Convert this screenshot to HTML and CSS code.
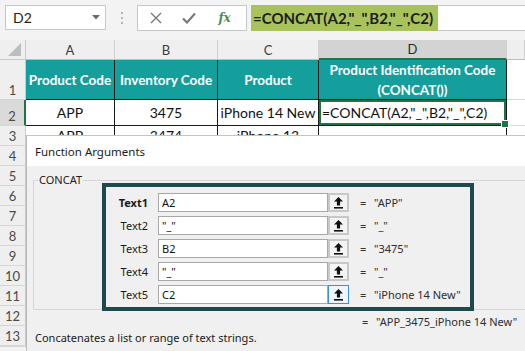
FILE: index.html
```html
<!DOCTYPE html>
<html>
<head>
<meta charset="utf-8">
<title>CONCAT</title>
<link rel="stylesheet" href="styles.css">
</head>
<body>
<div class="app">
  <div class="toolbar">
    <div class="namebox"><span>D2</span><svg class="dd" width="8" height="5" viewBox="0 0 8 5"><path d="M0 0H8L4 4.5Z" fill="#6b6b6b"/></svg></div>
    <div class="grip"><i></i><i></i><i></i></div>
    <div class="fbtns">
      <span class="ib ib1"><svg width="12" height="12" viewBox="0 0 12 12"><path d="M1 1L11 11M11 1L1 11" stroke="#7a7a7a" stroke-width="1.4" fill="none"/></svg></span>
      <span class="ib ib2"><svg width="14" height="12" viewBox="0 0 14 12"><path d="M1 6.5L5 10.5L13 1.5" stroke="#7a7a7a" stroke-width="2.2" fill="none"/></svg></span>
      <span class="ib ib3"><span class="fx">fx</span></span>
    </div>
    <div class="finput"><span class="formula">=CONCAT(A2,"_",B2,"_",C2)</span></div>
  </div>

  <div class="sheet">
    <div class="corner"><svg width="13" height="13" viewBox="0 0 13 13"><path d="M13 0V13H0Z" fill="#bdbdbd"/></svg></div>
    <div class="ch">A</div>
    <div class="ch">B</div>
    <div class="ch">C</div>
    <div class="ch ch-sel">D</div>
    <div class="ch"></div>

    <div class="rh rh-tall">1</div>
    <div class="c hd">Product Code</div>
    <div class="c hd">Inventory Code</div>
    <div class="c hd">Product</div>
    <div class="c hd">Product Identification Code<br>(CONCAT())</div>
    <div class="c e"></div>

    <div class="rh rh-sel">2</div>
    <div class="c d">APP</div>
    <div class="c d">3475</div>
    <div class="c d">iPhone 14 New</div>
    <div class="c d left sel">=CONCAT(A2,"_",B2,"_",C2)</div>
    <div class="c e"></div>

    <div class="rh">3</div>
    <div class="c d">APP</div>
    <div class="c d">3474</div>
    <div class="c d">iPhone 13</div>
    <div class="c d"></div>
    <div class="c e"></div>

    <div class="rh">4</div><div class="fill"></div>
    <div class="rh">5</div><div class="fill"></div>
    <div class="rh">6</div><div class="fill"></div>
    <div class="rh">7</div><div class="fill"></div>
    <div class="rh">8</div><div class="fill"></div>
    <div class="rh">9</div><div class="fill"></div>
    <div class="rh">10</div><div class="fill"></div>
    <div class="rh">11</div><div class="fill"></div>
    <div class="rh">12</div><div class="fill"></div>
    <div class="rh">13</div><div class="fill"></div>
    <div class="rh"></div><div class="fill"></div>
  </div>

  <div class="dialog">
    <div class="dtitle">Function Arguments</div>
    <div class="dbody">
      <div class="group">
        <span class="glabel">CONCAT</span>
        <div class="args">
          <div class="arg">
            <span class="alabel bold">Text1</span>
            <span class="ainput">A2</span>
            <span class="refbtn"><svg width="9" height="12" viewBox="0 0 9 12"><path d="M4.5 0L9 4.6H6.1V8.4H2.9V4.6H0Z" fill="#111"/><rect x="0" y="10" width="9" height="1.6" fill="#111"/></svg></span>
            <span class="eq">=</span>
            <span class="aval">"APP"</span>
          </div>
          <div class="arg">
            <span class="alabel">Text2</span>
            <span class="ainput">"_"</span>
            <span class="refbtn"><svg width="9" height="12" viewBox="0 0 9 12"><path d="M4.5 0L9 4.6H6.1V8.4H2.9V4.6H0Z" fill="#111"/><rect x="0" y="10" width="9" height="1.6" fill="#111"/></svg></span>
            <span class="eq">=</span>
            <span class="aval">"_"</span>
          </div>
          <div class="arg">
            <span class="alabel">Text3</span>
            <span class="ainput">B2</span>
            <span class="refbtn"><svg width="9" height="12" viewBox="0 0 9 12"><path d="M4.5 0L9 4.6H6.1V8.4H2.9V4.6H0Z" fill="#111"/><rect x="0" y="10" width="9" height="1.6" fill="#111"/></svg></span>
            <span class="eq">=</span>
            <span class="aval">"3475"</span>
          </div>
          <div class="arg">
            <span class="alabel">Text4</span>
            <span class="ainput">"_"</span>
            <span class="refbtn"><svg width="9" height="12" viewBox="0 0 9 12"><path d="M4.5 0L9 4.6H6.1V8.4H2.9V4.6H0Z" fill="#111"/><rect x="0" y="10" width="9" height="1.6" fill="#111"/></svg></span>
            <span class="eq">=</span>
            <span class="aval">"_"</span>
          </div>
          <div class="arg">
            <span class="alabel">Text5</span>
            <span class="ainput">C2</span>
            <span class="refbtn focus"><svg width="9" height="12" viewBox="0 0 9 12"><path d="M4.5 0L9 4.6H6.1V8.4H2.9V4.6H0Z" fill="#111"/><rect x="0" y="10" width="9" height="1.6" fill="#111"/></svg></span>
            <span class="eq">=</span>
            <span class="aval">"iPhone 14 New"</span>
          </div>
        </div>
      </div>
      <div class="result"><span class="eq">=</span><span class="aval">"APP_3475_iPhone 14 New"</span></div>
      <div class="desc">Concatenates a list or range of text strings.</div>
    </div>
  </div>
</div>
</body>
</html>
```

FILE: styles.css
```css
* { box-sizing: border-box; }
html, body { margin: 0; padding: 0; }
body {
  width: 525px;
  height: 351px;
  overflow: hidden;
  background: #f3f3f3;
  font-family: Lato, "Liberation Sans", sans-serif;
}
.app {
  position: relative;
  width: 525px;
  height: 351px;
  overflow: hidden;
}

/* ---------- formula bar ---------- */
.toolbar {
  height: 40px;
  display: flex;
  align-items: flex-start;
  padding: 5px 0 0 5px;
}
.namebox {
  width: 101px;
  height: 25px;
  background: #fff;
  border: 1px solid #c8c8c8;
  display: flex;
  align-items: center;
  justify-content: space-between;
  padding: 0 5px 0 7px;
  font-size: 14px;
  color: #222;
}
.grip {
  width: 31px;
  height: 25px;
  display: flex;
  flex-direction: column;
  align-items: center;
  justify-content: center;
  gap: 3px;
}
.grip i {
  display: block;
  width: 2px;
  height: 2px;
  background: #b5b5b5;
}
.fbtns {
  width: 110px;
  height: 26px;
  background: #fff;
  border: 1px solid #c8c8c8;
  display: flex;
  align-items: center;
}
.ib {
  display: flex;
  align-items: center;
  justify-content: center;
  height: 24px;
}
.ib1 { width: 37px; }
.ib2 { width: 30px; }
.ib3 { width: 44px; }
.fx {
  font-family: "DejaVu Serif", serif;
  font-style: italic;
  font-weight: bold;
  font-size: 12px;
  color: #4a8d5c;
}
.finput {
  flex: 1;
  height: 26px;
  margin-left: 4px;
  background: #fff;
  border-top: 1px solid #c8c8c8;
  border-bottom: 1px solid #c8c8c8;
}
.formula {
  display: block;
  width: 187px;
  height: 26px;
  margin-top: -1px;
  background: #a9c35c;
  padding-left: 2px;
  font-size: 15px;
  font-weight: bold;
  line-height: 26px;
  color: #1d1d1d;
  white-space: nowrap;
}

/* ---------- sheet ---------- */
.sheet {
  display: grid;
  grid-template-columns: 26px 89px 103px 101px 188px 18px;
  grid-template-rows: 20px 40px 26px repeat(11, 20px);
  font-size: 14px;
}
.corner {
  background: #efefef;
  border-right: 1px solid #c9c9c9;
  border-bottom: 1px solid #c9c9c9;
  display: flex;
  align-items: flex-end;
  justify-content: flex-end;
  padding: 0 4px 3px 0;
}
.ch {
  background: #efefef;
  border-right: 1px solid #d0d0d0;
  border-bottom: 1px solid #bdbdbd;
  display: flex;
  align-items: center;
  justify-content: center;
  color: #3c3c3c;
  font-size: 13px;
}
.ch-sel {
  background: #d3d3d3;
  border-bottom: 2px solid #217346;
  color: #2a2a2a;
}
.rh {
  background: #efefef;
  border-right: 1px solid #c9c9c9;
  border-bottom: 1px solid #d6d6d6;
  display: flex;
  align-items: center;
  justify-content: center;
  color: #4a4a4a;
  font-size: 13px;
}
.rh-tall {
  align-items: flex-end;
  padding-bottom: 1px;
}
.rh-sel {
  align-items: flex-end;
  padding-bottom: 1px;
  background: #dadada;
  border-right: 2px solid #217346;
}
.c {
  display: flex;
  align-items: center;
  justify-content: center;
  text-align: center;
  border-right: 1px solid #1a1a1a;
  border-bottom: 1px solid #1a1a1a;
  white-space: nowrap;
}
.hd {
  background: #149e9c;
  color: #fff;
  font-weight: bold;
  font-size: 13.5px;
  line-height: 20px;
}
.d {
  background: #fff;
  color: #111;
}
.left {
  justify-content: flex-start;
  padding-left: 3px;
}
.e {
  background: #fff;
  border-right: none;
  border-bottom: 1px solid #d9d9d9;
}
.sel {
  position: relative;
  box-shadow: inset 0 0 0 2px #217346;
}
.sel::after {
  content: "";
  position: absolute;
  right: -3px;
  bottom: -3px;
  width: 6px;
  height: 6px;
  background: #217346;
  border: 1px solid #fff;
}
.fill {
  grid-column: span 5;
  background: #fff;
}

/* ---------- dialog ---------- */
.dialog {
  position: absolute;
  left: 26px;
  top: 135px;
  width: 499px;
  height: 216px;
  background: #f0f0f0;
  border-left: 1px solid #b9b9b9;
  border-top: 1px solid #c4c4c4;
  font-family: "Noto Sans", "Open Sans", sans-serif;
  color: #111;
}
.dtitle {
  height: 30px;
  background: #fff;
  padding-left: 8px;
  font-size: 11.5px;
  line-height: 32px;
  color: #1a1a1a;
}
.dbody {
  padding: 14px 0 0 6px;
  font-size: 11px;
}
.group {
  position: relative;
  border: 1px solid #d6d6d6;
  border-right: none;
  margin-right: -10px;
}
.glabel {
  position: absolute;
  left: 4px;
  top: -9px;
  background: #f0f0f0;
  padding: 0 1px;
  line-height: 16px;
  color: #222;
}
.args {
  width: 372px;
  height: 128px;
  margin: 2px 0 -2px 68px;
  border: 4px solid #1d4b4d;
  padding-top: 4px;
}
.arg {
  height: 23px;
  display: flex;
  align-items: center;
}
.alabel {
  width: 42px;
  margin-right: 10px;
  text-align: right;
  color: #1a1a1a;
}
.bold { font-weight: bold; }
.ainput {
  width: 170px;
  height: 19px;
  background: #fff;
  border: 1px solid #a8a8a8;
  padding-left: 3px;
  line-height: 17px;
  color: #111;
}
.refbtn {
  width: 21px;
  height: 19px;
  display: flex;
  align-items: center;
  justify-content: center;
  background: #f4f4f4;
  border: 2px solid #c8c8c8;
}
.refbtn.focus {
  border: 1px solid #3c8fd8;
  background: #eef5fc;
}
.eq {
  width: 14px;
  margin-left: 11px;
  color: #333;
}
.aval {
  color: #2e2e2e;
}
.result {
  margin: 4px 0 0 329px;
  height: 16px;
  line-height: 16px;
  display: flex;
}
.result .eq { margin-left: 0; }
.desc {
  margin-left: 2px;
  height: 16px;
  line-height: 16px;
  color: #1a1a1a;
}
```
